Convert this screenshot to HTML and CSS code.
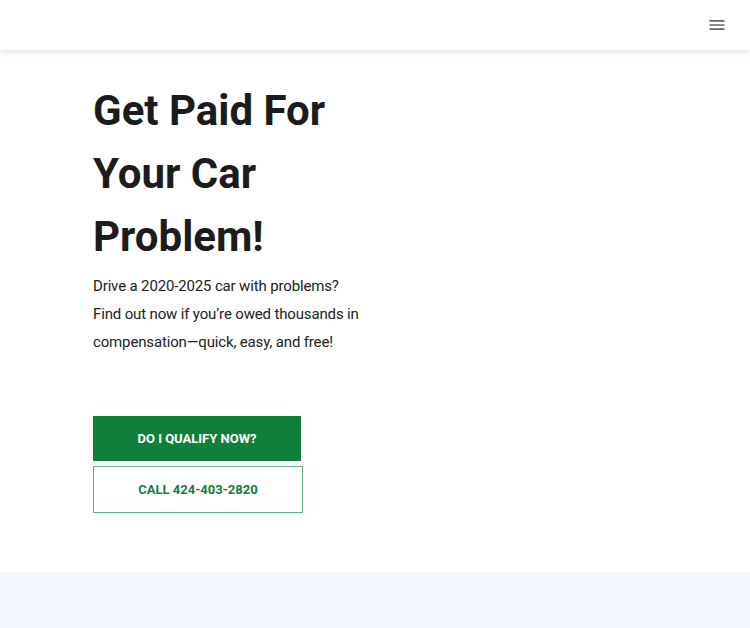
FILE: index.html
```html
<!DOCTYPE html>
<html lang="en">
<head>
    <meta charset="utf-8" />
    <title>Get Paid For Your Car Problem</title>
    <link rel="stylesheet" href="styles.css">
</head>
<body>

<div class="topbar">
    <a href="#" class="menu-btn" title="Menu">
        <svg viewBox="0 0 24 24" width="20" height="20"><path d="M3 18h18v-2H3v2zm0-5h18v-2H3v2zm0-7v2h18V6H3z" fill="currentColor"/></svg>
    </a>
</div>

<!--hero begin-->
<div class="hero">
    <div class="hero-inner">
        <h1 class="hero-title">Get Paid For Your Car Problem!</h1>
        <p class="hero-text">Drive a 2020-2025 car with problems? Find out now if you’re owed thousands in compensation—quick, easy, and free!</p>
        <div class="hero-actions">
            <a href="#" class="btn btn-solid">DO I QUALIFY NOW?</a>
            <a href="#" class="btn btn-outline">CALL 424-403-2820</a>
        </div>
    </div>
</div>
<!--hero end-->

<div class="next-section"></div>

</body>
</html>
```

FILE: styles.css
```css
html, body { margin: 0; padding: 0; background: #fff; font-family: Roboto, "Liberation Sans", Arial, sans-serif; }
a { text-decoration: none; }

.topbar { height: 50px; background: #fff; box-shadow: 0 2px 6px rgba(0, 0, 0, 0.12); display: flex; justify-content: flex-end; align-items: center; padding-right: 23px; position: relative; z-index: 2; }
.menu-btn { color: #666; display: flex; width: 20px; height: 20px; }

.hero { padding: 29px 0 59px 93px; }
.hero-inner { width: 275px; }
.hero-title { margin: 0; font-size: 42px; line-height: 63px; font-weight: 700; color: #1c1c1c; }
.hero-text { margin: 4px 0 0; font-size: 15px; letter-spacing: -0.15px; line-height: 28px; color: #222; }

.hero-actions { margin-top: 60px; display: flex; flex-direction: column; align-items: flex-start; gap: 5px; }
.btn { display: flex; justify-content: center; align-items: center; box-sizing: border-box; font-size: 13px; font-weight: 700; }
.btn-solid { width: 208px; height: 45px; background: #0e803b; color: #fff; }
.btn-outline { width: 210px; height: 47px; border: 1px solid #58b27a; color: #0e803b; background: #fff; }

.next-section { height: 56px; background: #f2f6fd; }
```
